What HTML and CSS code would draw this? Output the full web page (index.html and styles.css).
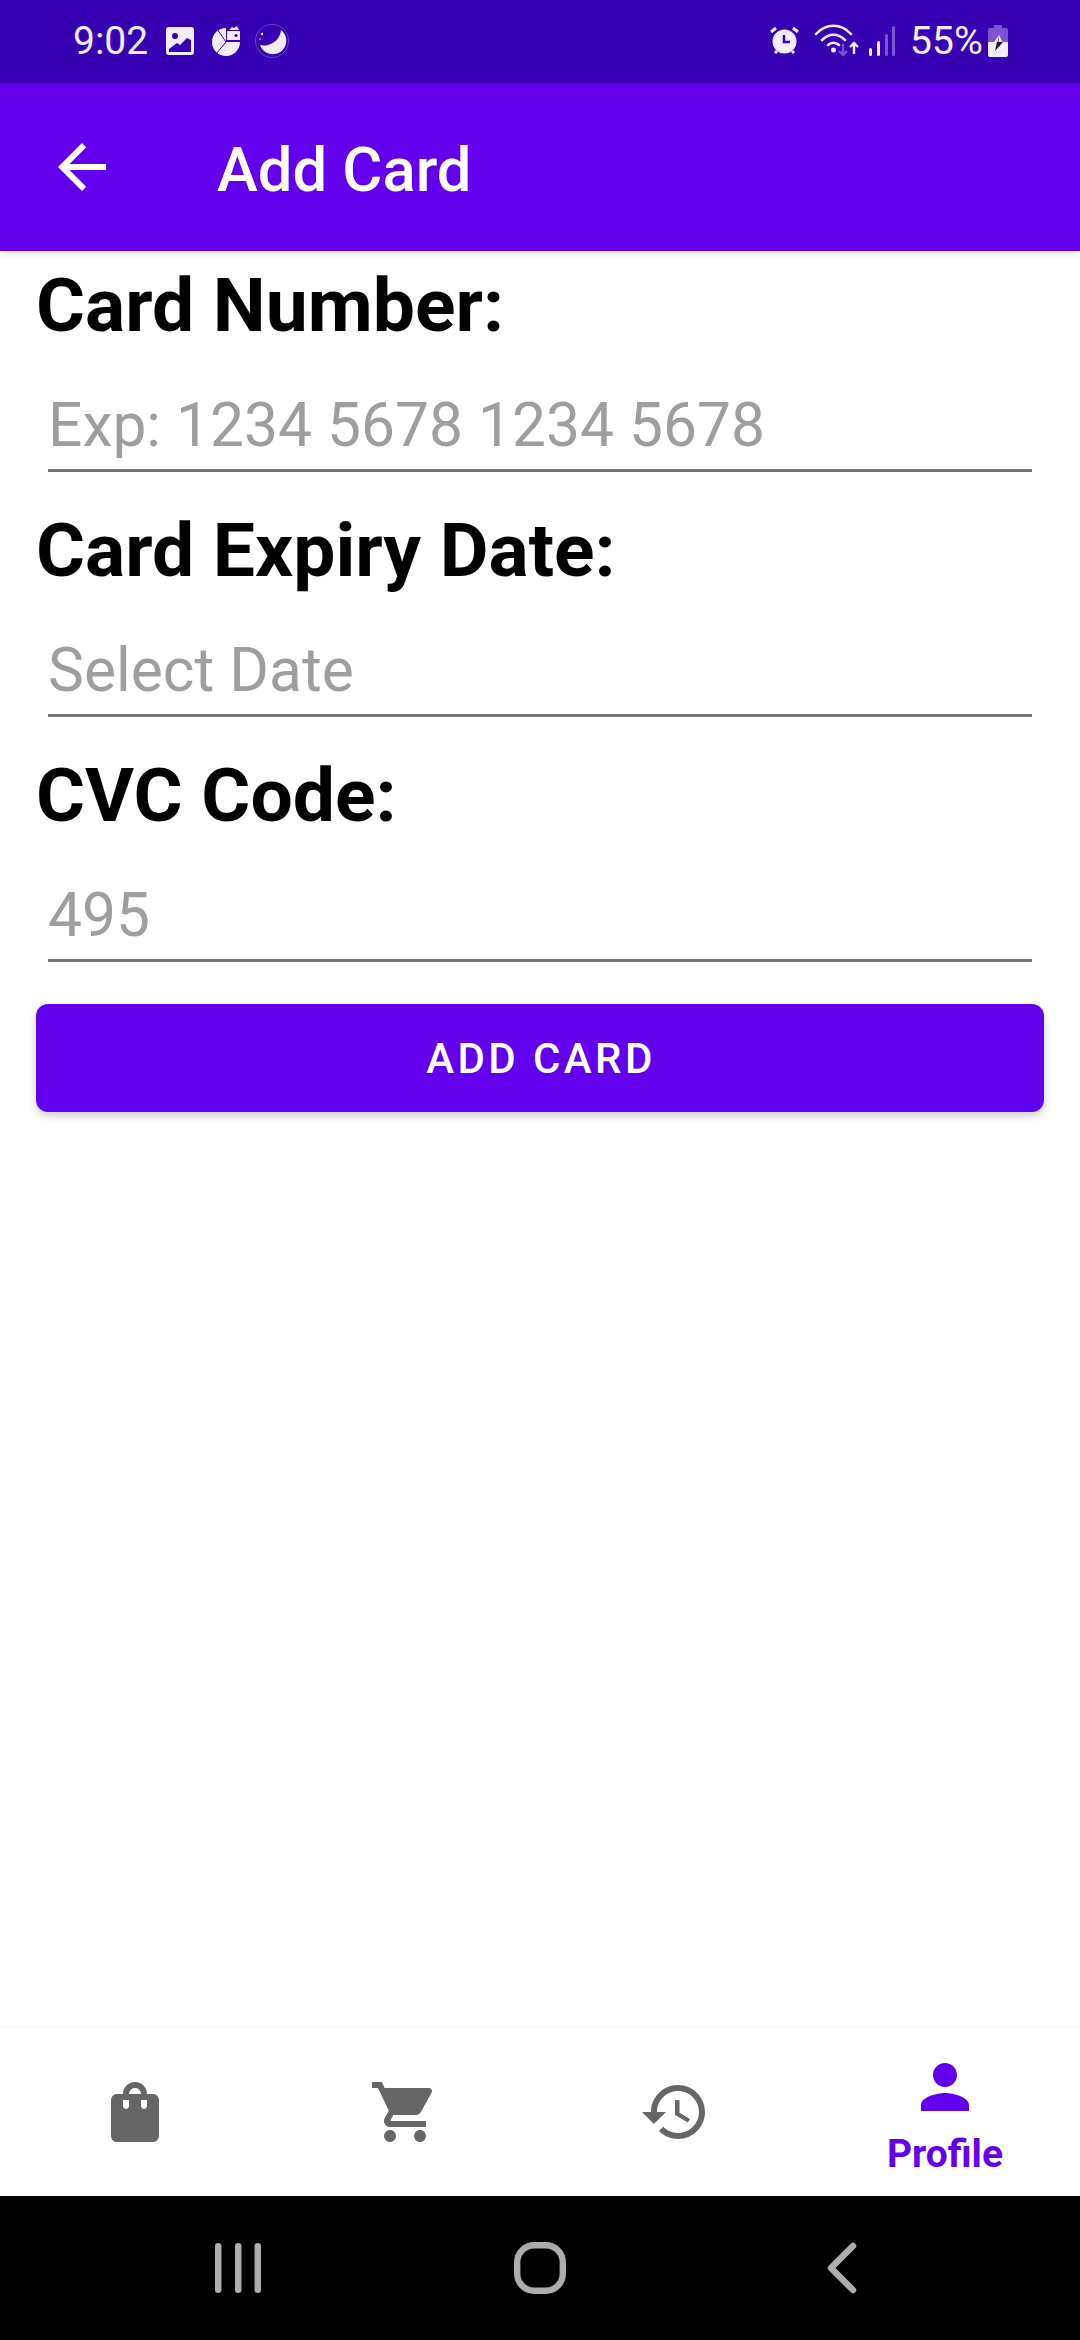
FILE: index.html
```html
<!DOCTYPE html>
<html lang="en">

<head>
    <meta charset="UTF-8">
    <meta name="viewport" content="width=device-width, initial-scale=1.0">
    <title>Add Card</title>
    <link rel="stylesheet" href="styles.css">
</head>

<body>
    <!-- Status bar -->
    <div class="status-bar">
        <div class="status-left">
            <span class="status-time">9:02</span>
            <svg class="ic-image" width="28" height="28" viewBox="0 0 28 28">
                <path fill="#f2ecfd" fill-rule="evenodd" d="M3 0h22a3 3 0 0 1 3 3v22a3 3 0 0 1-3 3H3a3 3 0 0 1-3-3V3a3 3 0 0 1 3-3zM9 6a3 3 0 1 0 0 6 3 3 0 0 0 0-6zM3 25h22v-12l-4-2-7 7-3-2-8 6z" />
            </svg>
            <svg class="ic-pie" width="29" height="30" viewBox="0 0 29 30">
                <path fill="#f2ecfd" d="M14 16V2A14 14 0 1 0 28 16z" />
                <path d="M14 16L5 3M14 16L4 28" stroke="#3700b3" stroke-width="1" fill="none" />
                <path fill="#f2ecfd" d="M15 5h13v9H15z" />
                <path fill="#f2ecfd" d="M17 4l3-3 2 1 3-2 2 4z" />
                <circle cx="24" cy="9.500" r="1.500" fill="#3700b3" />
            </svg>
            <svg class="ic-moon" width="34" height="34" viewBox="0 0 34 34">
                <circle cx="17" cy="17" r="16.500" fill="none" stroke="#6a45c8" stroke-width="1" />
                <path fill="#f2ecfd" d="M26 6A13.500 13.500 0 1 1 5 21A17 17 0 0 0 26 6z" />
                <circle cx="7" cy="10" r="1.200" fill="#f2ecfd" />
                <circle cx="5" cy="15" r=".8" fill="#f2ecfd" />
            </svg>
        </div>
        <div class="status-right">
            <svg class="ic-alarm" width="29" height="29" viewBox="0 0 29 29">
                <circle cx="14.500" cy="15.500" r="12" fill="#f2ecfd" />
                <path d="M1 6l5-4M28 6l-5-4M5 27l2-2M24 27l-2-2" stroke="#f2ecfd" stroke-width="3" fill="none" />
                <path d="M14 9v7h6" stroke="#3700b3" stroke-width="2.500" fill="none" />
            </svg>
            <svg class="ic-wifi" width="46" height="33" viewBox="0 0 46 33">
                <g fill="none" stroke="#f2ecfd" stroke-width="2.600" stroke-linecap="round">
                    <path d="M2 10C12 -1 27 -1 37 10" />
                    <path d="M8 16C15 9 24 9 31 16" />
                    <path d="M14 21C17 18 22 18 25 21" />
                </g>
                <circle cx="19.500" cy="26" r="2.500" fill="#f2ecfd" />
                <path d="M29 20v11M25 27l4 4 4-4" fill="none" stroke="#7c56cf" stroke-width="2.400" />
                <path d="M40 30V19M36 23l4-4 4 4" fill="none" stroke="#f2ecfd" stroke-width="2.400" />
            </svg>
            <svg class="ic-signal" width="28" height="30" viewBox="0 0 28 30">
                <rect x="2" y="22" width="3" height="8" rx="1.500" fill="#f2ecfd" />
                <rect x="10" y="15" width="3" height="15" rx="1.500" fill="#f2ecfd" />
                <rect x="18" y="8" width="3" height="22" rx="1.500" fill="#7c56cf" />
                <rect x="25" y="0" width="3" height="30" rx="1.500" fill="#7c56cf" />
            </svg>
            <span class="status-battery">55%</span>
            <svg class="ic-battery" width="20" height="32" viewBox="0 0 20 32">
                <path fill="#7c56cf" d="M6 0h8v3h4a2 2 0 0 1 2 2v13H0V5a2 2 0 0 1 2-2h4z" />
                <path fill="#f2ecfd" d="M0 17h20v13a2 2 0 0 1-2 2H2a2 2 0 0 1-2-2z" />
                <path fill="#f2ecfd" d="M11 10L6 17h3.500z M11 10v7h3.500z" />
                <path fill="#1a1a2a" d="M7 17h8l-8 9 2-9z" />
            </svg>
        </div>
    </div>

    <!-- Toolbar -->
    <div class="toolbar">
        <svg class="toolbar-back" width="72" height="72" viewBox="0 0 24 24">
            <path fill="#fff" d="M20 11H7.830l5.590-5.590L12 4l-8 8 8 8 1.410-1.410L7.830 13H20v-2z" />
        </svg>
        <span class="toolbar-title">Add Card</span>
    </div>

    <div class="form">
        <div class="field">
            <div class="field-label">Card Number:</div>
            <div class="field-input">Exp: 1234 5678 1234 5678</div>
        </div>
        <div class="field">
            <div class="field-label">Card Expiry Date:</div>
            <div class="field-input">Select Date</div>
        </div>
        <div class="field">
            <div class="field-label">CVC Code:</div>
            <div class="field-input">495</div>
        </div>
        <button class="btn-add">ADD CARD</button>
    </div>

    <!-- Bottom navigation -->
    <div class="bottom-nav">
        <div class="nav-item">
            <svg width="72" height="72" viewBox="0 0 24 24">
                <path fill="#666" d="M18 6h-2c0-2.210-1.790-4-4-4S8 3.790 8 6H6c-1.100 0-2 .9-2 2v12c0 1.100.9 2 2 2h12c1.100 0 2-.9 2-2V8c0-1.100-.9-2-2-2zm-8 4c0 .55-.45 1-1 1s-1-.45-1-1V8h2v2zm2-6c1.100 0 2 .9 2 2h-4c0-1.100.9-2 2-2zm4 6c0 .55-.45 1-1 1s-1-.45-1-1V8h2v2z" />
            </svg>
        </div>
        <div class="nav-item">
            <svg width="72" height="72" viewBox="0 0 24 24">
                <path fill="#666" d="M7 18c-1.100 0-1.990.9-1.990 2S5.900 22 7 22s2-.9 2-2-.9-2-2-2zM1 2v2h2l3.600 7.590-1.350 2.450c-.16.28-.25.61-.25.96 0 1.100.9 2 2 2h12v-2H7.420c-.14 0-.25-.11-.25-.25l.03-.12.9-1.630h7.450c.75 0 1.410-.41 1.750-1.030l3.580-6.490c.08-.14.12-.31.12-.48 0-.55-.45-1-1-1H5.210l-.94-2H1zm16 16c-1.100 0-1.990.9-1.990 2s.89 2 1.990 2 2-.9 2-2-.9-2-2-2z" />
            </svg>
        </div>
        <div class="nav-item">
            <svg width="72" height="72" viewBox="0 0 24 24">
                <path fill="#666" d="M13 3c-4.970 0-9 4.030-9 9H1l3.890 3.890.07.14L9 12H6c0-3.870 3.130-7 7-7s7 3.130 7 7-3.130 7-7 7c-1.930 0-3.680-.79-4.940-2.060l-1.420 1.420C8.270 19.990 10.510 21 13 21c4.970 0 9-4.030 9-9s-4.030-9-9-9zm-1 5v5l4.280 2.540.72-1.210-3.500-2.080V8H12z" />
            </svg>
        </div>
        <div class="nav-item nav-item-active">
            <svg width="72" height="72" viewBox="0 0 24 24">
                <path fill="#6200ee" d="M12 12c2.210 0 4-1.790 4-4s-1.790-4-4-4-4 1.790-4 4 1.790 4 4 4zm0 2c-2.670 0-8 1.340-8 4v2h16v-2c0-2.660-5.330-4-8-4z" />
            </svg>
            <span class="nav-label">Profile</span>
        </div>
    </div>

    <!-- System buttons -->
    <div class="system-nav">
        <svg width="46" height="50" viewBox="0 0 46 50">
            <rect x="0" y="0" width="6.500" height="50" rx="3.200" fill="#adadad" />
            <rect x="20" y="0" width="6.500" height="50" rx="3.200" fill="#adadad" />
            <rect x="39.500" y="0" width="6.500" height="50" rx="3.200" fill="#adadad" />
        </svg>
        <svg width="52" height="52" viewBox="0 0 52 52">
            <rect x="3.200" y="3.200" width="45.600" height="45.600" rx="17" fill="none" stroke="#adadad" stroke-width="6.400" />
        </svg>
        <svg width="30" height="52" viewBox="0 0 30 52">
            <path d="M26 4L4 26l22 22" fill="none" stroke="#adadad" stroke-width="6.500" stroke-linecap="round" stroke-linejoin="round" />
        </svg>
    </div>
</body>

</html>
```

FILE: styles.css
```css
* {
    box-sizing: border-box;
}

body {
    margin: 0;
    height: 2340px;
    display: flex;
    flex-direction: column;
    overflow: hidden;
    font-family: Roboto, "Liberation Sans", sans-serif;
    background-color: #fff;
}

.status-bar {
    height: 83px;
    flex: none;
    display: flex;
    justify-content: space-between;
    align-items: center;
    padding: 0 72px 2px 73px;
    background-color: #3700b3;
    color: #f2ecfd;
}

.status-left,
.status-right {
    display: flex;
    align-items: center;
}

.status-time {
    font-size: 39px;
    width: 93px;
}

.ic-pie {
    margin-left: 18px;
}

.ic-moon {
    margin-left: 14px;
}

.ic-wifi {
    margin-left: 15px;
}

.ic-signal {
    margin-left: 7px;
}

.status-battery {
    font-size: 39.500px;
    margin-left: 15px;
}

.ic-battery {
    margin-left: 5px;
}

.toolbar {
    height: 168px;
    flex: none;
    display: flex;
    align-items: center;
    padding-left: 46px;
    background-color: #6200ee;
    box-shadow: 0 3px 6px rgba(0, 0, 0, 0.12);
    position: relative;
}

.toolbar-title {
    margin-left: 99px;
    padding-top: 5px;
    color: #fff;
    font-size: 61.500px;
    font-weight: 500;
}

.form {
    flex: 1;
    padding: 0 36px;
}

.field {
    height: 245px;
}

.field-label {
    height: 98px;
    padding-top: 10px;
    font-size: 75px;
    font-weight: 700;
    line-height: 88px;
    color: #000;
}

.field-input {
    height: 123px;
    margin: 0 12px;
    padding-top: 42px;
    font-size: 60.500px;
    line-height: 70px;
    color: #9e9e9e;
    border-bottom: 3px solid #757575;
}

.btn-add {
    display: block;
    width: 100%;
    height: 108px;
    margin-top: 18px;
    padding-left: 8px;
    border: none;
    border-radius: 12px;
    background-color: #6200ee;
    color: #fff;
    font-family: inherit;
    font-size: 42px;
    font-weight: 500;
    letter-spacing: 3.400px;
    box-shadow: 0 4px 8px rgba(0, 0, 0, 0.2);
}

.bottom-nav {
    height: 168px;
    flex: none;
    display: flex;
    background-color: #fff;
    box-shadow: 0 -2px 3px rgba(0, 0, 0, 0.04);
    position: relative;
}

.nav-item {
    flex: 1;
    display: flex;
    flex-direction: column;
    align-items: center;
    padding-top: 48px;
}

.nav-item-active {
    padding-top: 23px;
}

.nav-label {
    margin-top: 8px;
    color: #6200ee;
    font-size: 39px;
    font-weight: 700;
    line-height: 46px;
}

.system-nav {
    height: 144px;
    flex: none;
    display: grid;
    grid-template-columns: repeat(3, 302px);
    justify-content: center;
    justify-items: center;
    align-items: center;
    background-color: #000;
}
```
